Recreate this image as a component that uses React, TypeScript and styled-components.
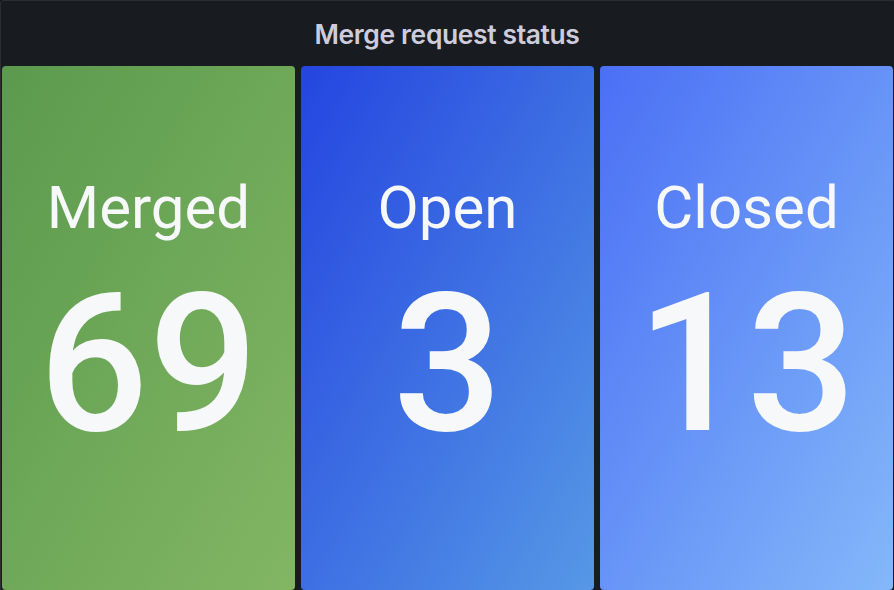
import styled, { createGlobalStyle } from "styled-components";

const GlobalStyle = createGlobalStyle`
  html, body {
    margin: 0;
    padding: 0;
    background: #111217;
  }
  body {
    font-family: Roboto, "Noto Sans", sans-serif;
  }
`;

const Panel = styled.section`
  width: 896px;
  height: 592px;
  box-sizing: border-box;
  display: flex;
  flex-direction: column;
  background: #181b1f;
  border: 1px solid #2b2d33;
  border-radius: 3px;
  overflow: hidden;
`;

const Header = styled.header`
  height: 65px;
  display: flex;
  align-items: center;
  justify-content: center;
  padding-right: 2px;
`;

const Title = styled.h2`
  margin: 0;
  font-family: Inter, Roboto, sans-serif;
  font-size: 26.5px;
  font-weight: 600;
  color: #ccccdc;
  letter-spacing: -0.4px;
`;

const Grid = styled.div`
  flex: 1;
  display: grid;
  grid-template-columns: repeat(3, 293px);
  column-gap: 6px;
  padding: 0 0 1px 1px;
`;

const Stat = styled.div<{ $from: string; $to: string }>`
  display: flex;
  flex-direction: column;
  align-items: center;
  justify-content: flex-start;
  padding-top: 105px;
  border-radius: 4px;
  background: linear-gradient(120deg, ${(p) => p.$from}, ${(p) => p.$to});
  color: #f7f8fa;
`;

const Label = styled.div`
  font-size: 60px;
  line-height: 74px;
  font-weight: 400;
`;

const Value = styled.div`
  font-size: 193px;
  line-height: 200px;
  font-weight: 500;
  margin-top: 19px;
`;

const stats = [
  { label: "Merged", value: 69, from: "#5b9a4e", to: "#82b663" },
  { label: "Open", value: 3, from: "#2445e0", to: "#5698e6" },
  { label: "Closed", value: 13, from: "#4b6ff5", to: "#83b8f9" },
];

export default function App() {
  return (
    <>
      <GlobalStyle />
      <Panel>
        <Header>
          <Title>Merge request status</Title>
        </Header>
        <Grid>
          {stats.map((s) => (
            <Stat key={s.label} $from={s.from} $to={s.to}>
              <Label>{s.label}</Label>
              <Value>{s.value}</Value>
            </Stat>
          ))}
        </Grid>
      </Panel>
    </>
  );
}
